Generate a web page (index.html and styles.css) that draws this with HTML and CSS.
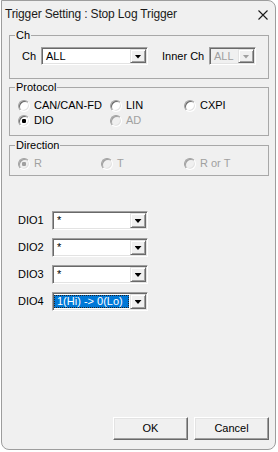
FILE: index.html
```html
<!DOCTYPE html>
<html>
<head>
<meta charset="utf-8">
<link rel="stylesheet" href="styles.css">
</head>
<body>
<div class="window">
  <div class="titlebar">
    <span class="title">Trigger Setting : Stop Log Trigger</span>
    <svg class="close" width="10" height="10" viewBox="0 0 10 10"><path d="M0.5 0.5L9.5 9.5M9.5 0.5L0.5 9.5" stroke="#1a1a1a" stroke-width="1.1" fill="none"/></svg>
  </div>

  <fieldset class="group">
    <legend>Ch</legend>
    <div class="ch-row">
      <span class="lbl lbl-ch">Ch</span>
      <div class="combo combo-ch"><span class="val">ALL</span><span class="drop"><i class="tri"></i></span></div>
      <span class="lbl lbl-inner">Inner Ch</span>
      <div class="combo combo-inner disabled"><span class="val">ALL</span><span class="drop"><i class="tri"></i></span></div>
    </div>
  </fieldset>

  <fieldset class="group group-proto">
    <legend>Protocol</legend>
    <div class="radios proto">
      <label class="radio"><span class="dot"></span>CAN/CAN-FD</label>
      <label class="radio"><span class="dot"></span>LIN</label>
      <label class="radio"><span class="dot"></span>CXPI</label>
      <label class="radio"><span class="dot checked"></span>DIO</label>
      <label class="radio off"><span class="dot"></span>AD</label>
    </div>
  </fieldset>

  <fieldset class="group group-dir">
    <legend>Direction</legend>
    <div class="radios dir">
      <label class="radio off"><span class="dot checked"></span>R</label>
      <label class="radio off"><span class="dot"></span>T</label>
      <label class="radio off"><span class="dot"></span>R or T</label>
    </div>
  </fieldset>

  <div class="dio">
    <div class="dio-row"><span class="lbl lbl-dio">DIO1</span><div class="combo combo-dio"><span class="val">*</span><span class="drop"><i class="tri"></i></span></div></div>
    <div class="dio-row"><span class="lbl lbl-dio">DIO2</span><div class="combo combo-dio"><span class="val">*</span><span class="drop"><i class="tri"></i></span></div></div>
    <div class="dio-row"><span class="lbl lbl-dio">DIO3</span><div class="combo combo-dio"><span class="val">*</span><span class="drop"><i class="tri"></i></span></div></div>
    <div class="dio-row"><span class="lbl lbl-dio">DIO4</span><div class="combo combo-dio"><span class="val selected">1(Hi) -&gt; 0(Lo)</span><span class="drop"><i class="tri"></i></span></div></div>
  </div>

  <div class="buttons">
    <div class="btn">OK</div>
    <div class="btn">Cancel</div>
  </div>
</div>
</body>
</html>
```

FILE: styles.css
```css
html, body {
  margin: 0;
  padding: 0;
  background: #ffffff;
}
body {
  font-family: "Liberation Sans", Arial, sans-serif;
  font-size: 11px;
  line-height: 13px;
  color: #000;
}
.window {
  box-sizing: border-box;
  width: 275px;
  height: 450px;
  margin-left: 1px;
  background: #f0f0f0;
  border: 1px solid #9d9d9d;
  border-radius: 0 8px 8px 8px;
  display: flex;
  flex-direction: column;
}
.titlebar {
  height: 27px;
  display: flex;
  align-items: center;
  justify-content: space-between;
  padding: 0 7px 1px 3px;
}
.title {
  font-size: 12px;
  letter-spacing: -0.15px;
  color: #1a1a1a;
}
.close {
  display: block;
}
.group {
  margin: 0 6px 0 7px;
  padding: 0;
  border: 1px solid #a8a8a8;
  min-width: 0;
}
.group legend {
  margin-left: 5px;
  padding: 0 1px;
  line-height: 13px;
}
.group-proto {
  margin-top: 2px;
}
.group-dir {
  margin-top: 3px;
}
.ch-row {
  display: flex;
  align-items: center;
  padding: 5px 0 13px 12px;
}
.lbl-ch {
  width: 19px;
}
.lbl-inner {
  width: 47px;
  margin-left: 14px;
}
.combo {
  box-sizing: border-box;
  display: flex;
  background: #fff;
  border: 1px solid;
  border-color: #a0a0a0 #ffffff #ffffff #a0a0a0;
  box-shadow: inset 1px 1px #696969, inset -1px -1px #e3e3e3;
}
.combo-ch {
  width: 107px;
  height: 18px;
}
.combo-inner {
  width: 47px;
  height: 18px;
}
.combo-dio {
  width: 96px;
  height: 19px;
}
.combo.disabled {
  background: #f0f0f0;
  color: #a0a0a0;
}
.val {
  flex: 1;
  display: flex;
  align-items: center;
  padding-left: 4px;
  white-space: nowrap;
  overflow: hidden;
}
.val.selected {
  margin: 2px 1px 2px 1px;
  padding-left: 3px;
  background: #0078d7;
  color: #fff;
  outline: 1px dotted #222;
  outline-offset: -1px;
}
.drop {
  box-sizing: border-box;
  width: 16px;
  margin: 1px 1px 1px 0;
  background: #f0f0f0;
  border: 1px solid;
  border-color: #e3e3e3 #696969 #696969 #e3e3e3;
  box-shadow: inset 1px 1px #fff, inset -1px -1px #a0a0a0;
  display: flex;
  align-items: center;
  justify-content: center;
}
.tri {
  display: block;
  width: 7px;
  height: 4px;
  background: #000;
  clip-path: polygon(0 0, 100% 0, 50% 100%);
  margin-top: 1px;
}
.disabled .tri {
  background: #a0a0a0;
}
.radios {
  display: grid;
  padding-left: 8px;
}
.proto {
  grid-template-columns: 92px 74px 1fr;
  grid-auto-rows: 15px;
  padding-top: 4px;
  padding-bottom: 7px;
}
.dir {
  grid-template-columns: 83px 83px 1fr;
  grid-auto-rows: 15px;
  padding-top: 4px;
  padding-bottom: 4px;
}
.radio {
  display: flex;
  align-items: center;
  white-space: nowrap;
}
.radio.off {
  color: #a0a0a0;
}
.dot {
  box-sizing: border-box;
  width: 12px;
  height: 12px;
  margin-right: 4px;
  border-radius: 50%;
  border: 1px solid;
  border-color: #a0a0a0 #ffffff #ffffff #a0a0a0;
  box-shadow: inset 1px 1px #696969, inset -1px -1px #e3e3e3;
  background: #fff;
}
.dot.checked {
  background: radial-gradient(circle, #000 0, #000 2px, #fff 2.4px);
}
.off .dot {
  background: #f0f0f0;
  box-shadow: inset 1px 1px #a0a0a0, inset -1px -1px #e3e3e3;
}
.off .dot.checked {
  background: radial-gradient(circle, #a0a0a0 0, #a0a0a0 2px, #f0f0f0 2.4px);
}
.dio {
  display: flex;
  flex-direction: column;
  gap: 8px;
  padding: 35px 0 0 16px;
}
.dio-row {
  display: flex;
  align-items: center;
}
.lbl-dio {
  width: 34px;
}
.buttons {
  margin-top: auto;
  display: flex;
  justify-content: flex-end;
  gap: 6px;
  padding: 0 6px 9px 0;
}
.btn {
  box-sizing: border-box;
  width: 75px;
  height: 23px;
  display: flex;
  align-items: center;
  justify-content: center;
  background: #f0f0f0;
  border: 1px solid;
  border-color: #ffffff #696969 #696969 #ffffff;
  box-shadow: inset -1px -1px #a0a0a0, inset 1px 1px #e3e3e3;
}
```
